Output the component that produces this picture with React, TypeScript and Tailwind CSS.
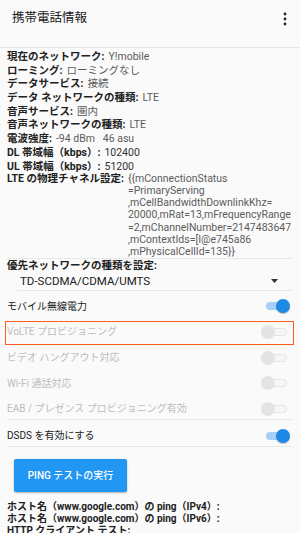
import React from 'react'

const font = { fontFamily: 'Roboto, "Noto Sans CJK JP", sans-serif' }

const info: { label: string; value: string; dark?: boolean }[] = [
  { label: '現在のネットワーク:', value: 'Y!mobile' },
  { label: 'ローミング:', value: 'ローミングなし' },
  { label: 'データサービス:', value: '接続' },
  { label: 'データ ネットワークの種類:', value: 'LTE' },
  { label: '音声サービス:', value: '圏内' },
  { label: '音声ネットワークの種類:', value: 'LTE' },
  { label: '電波強度:', value: '-94 dBm   46 asu' },
  { label: 'DL 帯域幅（kbps）:', value: '102400', dark: true },
  { label: 'UL 帯域幅（kbps）:', value: '51200', dark: true },
]

const lteValue = [
  '{{mConnectionStatus',
  '=PrimaryServing',
  ',mCellBandwidthDownlinkKhz=',
  '20000,mRat=13,mFrequencyRange',
  '=2,mChannelNumber=2147483647',
  ',mContextIds=[I@e745a86',
  ',mPhysicalCellId=135}}',
]

function Toggle({ on }: { on: boolean }) {
  return (
    <div className="relative w-[29px] h-[14px] shrink-0">
      <div
        className={
          on
            ? 'absolute left-[5px] top-[3px] w-[21px] h-[8px] rounded-full bg-[#a6d0f6]'
            : 'absolute left-[5px] top-[3px] w-[21px] h-[8px] rounded-full bg-[#f6f6f6] border border-[#e4e4e4]'
        }
      />
      <div
        className={
          on
            ? 'absolute left-[15px] top-0 w-[14px] h-[14px] rounded-full bg-[#1e88e5] shadow-[0_1px_1px_rgba(0,0,0,0.25)]'
            : 'absolute left-0 top-0 w-[14px] h-[14px] rounded-full bg-[#e4e4e4]'
        }
      />
    </div>
  )
}

function SwitchRow({
  label,
  on,
  disabled,
  className,
}: {
  label: string
  on: boolean
  disabled?: boolean
  className: string
}) {
  return (
    <div className={`flex items-center justify-between pr-[2px] text-[10px] ${className}`}>
      <span className={disabled ? 'text-[#bdbdbd]' : 'text-[#212121]'}>{label}</span>
      <Toggle on={on} />
    </div>
  )
}

export default function App() {
  return (
    <div className="w-[300px] h-[533px] overflow-hidden bg-[#fafafa] text-[#212121]" style={font}>
      <div className="h-[48px] border-b border-[#e6e6e6] flex items-center justify-between pl-[12px] pr-[13px] pb-[10px]">
        <span className="text-[12.5px]">携帯電話情報</span>
        <svg width="4" height="14" viewBox="0 0 4 14">
          <circle cx="2" cy="2" r="1.4" fill="#222" />
          <circle cx="2" cy="7" r="1.4" fill="#222" />
          <circle cx="2" cy="12" r="1.4" fill="#222" />
        </svg>
      </div>

      <div className="pl-[7px] pr-[8px]">
        <div className="pt-[2px] text-[10.5px]">
          {info.map((r) => (
            <div key={r.label} className="h-[13.7px] leading-[13.7px] whitespace-pre">
              <span className="font-bold text-[#212121]">{r.label}</span>
              <span className={`ml-[4px] ${r.dark ? 'text-[#333]' : 'text-[#5c5c5c]'}`}>{r.value}</span>
            </div>
          ))}
          <div className="flex leading-[12.1px]">
            <span className="font-bold shrink-0 mr-[4px]">LTE の物理チャネル設定:</span>
            <div className="text-[#5c5c5c]">
              {lteValue.map((l) => (
                <div key={l} className="h-[12.1px] whitespace-nowrap">
                  {l}
                </div>
              ))}
            </div>
          </div>
        </div>

        <div className="h-px bg-[#e8e8e8]" />

        <div className="h-[14px] leading-[14px] text-[10.5px] font-bold">優先ネットワークの種類を設定:</div>
        <div className="h-[17px] flex items-center justify-between pl-[13px] pr-[14px] text-[11.5px] text-[#212121]">
          <span>TD-SCDMA/CDMA/UMTS</span>
          <svg width="7" height="4" viewBox="0 0 7 4">
            <path d="M0 0H7L3.5 4Z" fill="#333" />
          </svg>
        </div>
        <div className="ml-[10px] h-px bg-[#e8e8e8]" />

        <div className="pt-[2.7px]">
          <SwitchRow label="モバイル無線電力" on className="h-[25.6px]" />
          <div className="relative">
            <SwitchRow label="VoLTE プロビジョニング" on={false} disabled className="h-[25.6px]" />
            <div className="absolute left-[-2px] right-[-2px] top-[1.5px] bottom-[0px] border-[1.5px] border-[#ff5a1f]" />
          </div>
          <SwitchRow label="ビデオ ハングアウト対応" on={false} disabled className="h-[25.6px]" />
          <SwitchRow label="Wi-Fi 通話対応" on={false} disabled className="h-[25.6px]" />
          <SwitchRow label="EAB / プレゼンス プロビジョニング有効" on={false} disabled className="h-[22.9px] pt-[3px]" />
        </div>
        <div className="h-px bg-[#e8e8e8]" />
        <SwitchRow label="DSDS を有効にする" on className="h-[26px] pt-[6px]" />
        <div className="h-px bg-[#e8e8e8]" />

        <button className="mt-[12px] ml-[7px] w-[113px] h-[33px] rounded-[2px] bg-[#2196f3] text-white text-[10px] font-medium shadow-[0_1px_2px_rgba(0,0,0,0.3)]">
          PING テストの実行
        </button>

        <div className="mt-[9px] text-[10px] font-bold leading-[12px] whitespace-nowrap">
          <div>ホスト名（www.google.com）の ping（IPv4）:</div>
          <div>ホスト名（www.google.com）の ping（IPv6）:</div>
          <div>HTTP クライアント テスト:</div>
        </div>
      </div>
    </div>
  )
}
